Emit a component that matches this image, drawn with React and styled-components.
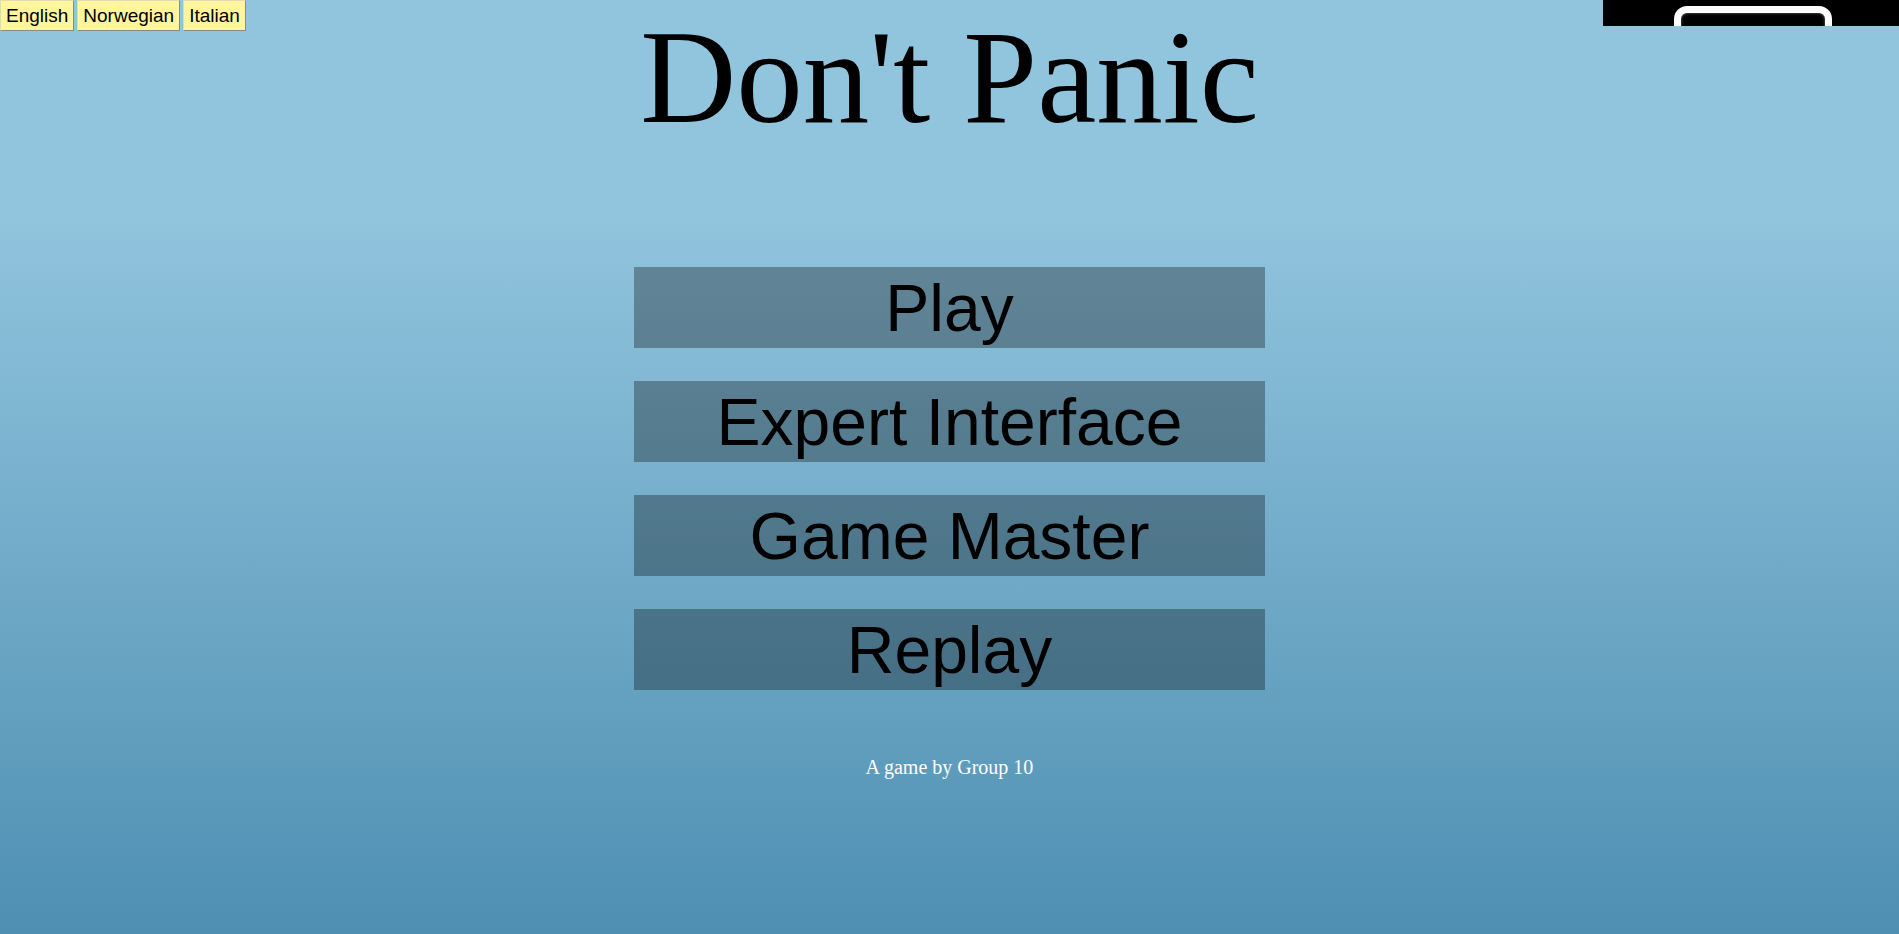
import React from "react";
import styled, { createGlobalStyle } from "styled-components";

const GlobalStyle = createGlobalStyle`
  html, body {
    margin: 0;
    padding: 0;
  }
  body {
    font-family: "Liberation Serif", serif;
  }
`;

const Page = styled.div`
  position: relative;
  min-height: 100vh;
  background: linear-gradient(
    to bottom,
    #91c4dd 0px,
    #91c4dd 220px,
    #4e8fb2 100%
  );
  overflow: hidden;
`;

const LangBar = styled.div`
  position: absolute;
  top: 0;
  left: 0;
  display: flex;
  gap: 3px;
`;

const LangButton = styled.button`
  font-family: "Liberation Sans", Arial, sans-serif;
  font-size: 19px;
  line-height: normal;
  padding: 4px 5px 3px;
  background: #fff59d;
  color: #000;
  border: 1px solid;
  border-color: #e0dcae #8a8a8a #8a8a8a #e0dcae;
  margin: 0;
  cursor: pointer;
`;

const Corner = styled.div`
  position: absolute;
  top: 0;
  right: 0;
  width: 296px;
  height: 26px;
  background: #000;
  overflow: hidden;
`;

const Frame = styled.div`
  box-sizing: border-box;
  margin: 6px 0 0 71px;
  width: 158px;
  height: 60px;
  border: 7px solid #fff;
  border-radius: 13px;
  box-shadow: inset 0 0 3px #777;
`;

const Title = styled.h1`
  margin: 0;
  text-align: center;
  font-family: "Liberation Serif", serif;
  font-weight: normal;
  font-size: 133px;
  line-height: normal;
  color: #000;
`;

const Menu = styled.nav`
  display: flex;
  flex-direction: column;
  align-items: center;
  gap: 33px;
  margin-top: 113px;
`;

const MenuButton = styled.button`
  display: flex;
  align-items: center;
  justify-content: center;
  width: 631px;
  height: 81px;
  padding: 0;
  border: none;
  background: rgba(0, 0, 0, 0.31);
  color: #000;
  font-family: "Liberation Sans", Arial, sans-serif;
  font-size: 66px;
  cursor: pointer;
`;

const Footer = styled.p`
  margin: 66px 0 0;
  text-align: center;
  color: #fff;
  font-family: "Liberation Serif", serif;
  font-size: 20px;
`;

const languages = ["English", "Norwegian", "Italian"];
const entries = ["Play", "Expert Interface", "Game Master", "Replay"];

export default function App() {
  return (
    <Page>
      <GlobalStyle />
      <LangBar>
        {languages.map((l) => (
          <LangButton key={l}>{l}</LangButton>
        ))}
      </LangBar>
      <Corner>
        <Frame />
      </Corner>
      <Title>Don't Panic</Title>
      <Menu>
        {entries.map((e) => (
          <MenuButton key={e}>{e}</MenuButton>
        ))}
      </Menu>
      <Footer>A game by Group 10</Footer>
    </Page>
  );
}
